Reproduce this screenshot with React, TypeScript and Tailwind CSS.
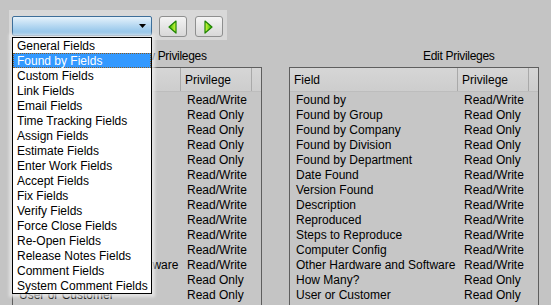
import React from 'react';

const rows: [string, string][] = [
  ['Found by', 'Read/Write'],
  ['Found by Group', 'Read Only'],
  ['Found by Company', 'Read Only'],
  ['Found by Division', 'Read Only'],
  ['Found by Department', 'Read Only'],
  ['Date Found', 'Read/Write'],
  ['Version Found', 'Read/Write'],
  ['Description', 'Read/Write'],
  ['Reproduced', 'Read/Write'],
  ['Steps to Reproduce', 'Read/Write'],
  ['Computer Config', 'Read/Write'],
  ['Other Hardware and Software', 'Read/Write'],
  ['How Many?', 'Read Only'],
  ['User or Customer', 'Read Only'],
];

const fieldGroups = [
  'General Fields',
  'Found by Fields',
  'Custom Fields',
  'Link Fields',
  'Email Fields',
  'Time Tracking Fields',
  'Assign Fields',
  'Estimate Fields',
  'Enter Work Fields',
  'Accept Fields',
  'Fix Fields',
  'Verify Fields',
  'Force Close Fields',
  'Re-Open Fields',
  'Release Notes Fields',
  'Comment Fields',
  'System Comment Fields',
];

function Arrow({ dir }: { dir: 'left' | 'right' }) {
  const pts = dir === 'left' ? '8,1 1,7 8,13' : '1,1 8,7 1,13';
  const id = `g-${dir}`;
  return (
    <svg width="10" height="14" viewBox="0 0 10 14">
      <defs>
        <linearGradient id={id} x1="0" y1="0" x2="1" y2="0">
          <stop offset="0" stopColor={dir === 'left' ? '#2fae00' : '#d8ff40'} />
          <stop offset="1" stopColor={dir === 'left' ? '#d8ff40' : '#2fae00'} />
        </linearGradient>
      </defs>
      <polygon points={pts} fill={`url(#${id})`} stroke="#1d8400" strokeWidth="1.2" strokeLinejoin="round" />
    </svg>
  );
}

function NavButton({ dir }: { dir: 'left' | 'right' }) {
  return (
    <button className="flex h-[21px] w-[28px] items-center justify-center rounded-[3px] border border-[#8e8f8f] bg-gradient-to-b from-[#f4f4f4] to-[#d8d8d8]">
      <Arrow dir={dir} />
    </button>
  );
}

function PrivTable({ label, labelOffset }: { label: string; labelOffset: string }) {
  return (
    <div className="flex w-[250px] flex-col">
      <div className={`h-[27px] pt-[9px] text-[12px] leading-[14px] tracking-[-0.3px] ${labelOffset}`}>{label}</div>
      <div className="h-[240px] border border-[#5e5e5e] bg-[#c6c6c6]">
        <div className="flex h-[24px] border-b border-[#bdbdbd] bg-gradient-to-b from-[#d6d6d6] to-[#cdcdcd]">
          <div className="flex w-[168px] items-center border-r border-[#a9a9a9] pl-[4px]">Field</div>
          <div className="flex w-[71px] items-center border-r border-[#a9a9a9] pl-[4px]">Privilege</div>
          <div className="flex-1" />
        </div>
        <div>
          {rows.map(([f, p]) => (
            <div key={f} className="flex h-[15px] items-center">
              <div className="w-[169px] whitespace-nowrap pl-[6px]">{f}</div>
              <div className="whitespace-nowrap pl-[5px]">{p}</div>
            </div>
          ))}
        </div>
      </div>
    </div>
  );
}

export default function App() {
  return (
    <div className="relative h-[305px] w-[551px] overflow-hidden bg-[#c4c4c4] font-['Liberation_Sans',Arial,sans-serif] text-[12px] text-black">
      <div className="ml-[9px] mt-[10px] flex h-[30px] w-[218px] items-start gap-[7px] bg-[#d8d8d8] pl-[3px] pt-[6px]">
        <div className="relative h-[20px] w-[140px] rounded-[2px] border border-[#3d6e99] bg-gradient-to-b from-[#e6f2fb] via-[#b4d7f1] to-[#86bde6]">
          <svg className="absolute right-[5px] top-[7px]" width="7" height="4" viewBox="0 0 7 4">
            <polygon points="0,0 7,0 3.5,4" fill="#000" />
          </svg>
        </div>
        <div className="flex gap-[8px]">
          <NavButton dir="left" />
          <NavButton dir="right" />
        </div>
      </div>

      <div className="ml-[12px] flex gap-[27px]">
        <PrivTable label="View Privileges" labelOffset="pl-[118px]" />
        <PrivTable label="Edit Privileges" labelOffset="pl-[134px]" />
      </div>

      <div className="absolute left-[12px] top-[37px] w-[140px] border border-black bg-white shadow-[0_0_3px_3px_rgba(235,235,235,0.8)]">
        {fieldGroups.map((g) => (
          <div
            key={g}
            className={
              g === 'Found by Fields'
                ? 'flex h-[15px] items-center whitespace-nowrap border border-dotted border-[#8a5a20] bg-[#3399ff] pl-[3px] text-white'
                : 'flex h-[15px] items-center whitespace-nowrap border border-transparent pl-[3px]'
            }
          >
            {g}
          </div>
        ))}
      </div>
    </div>
  );
}
